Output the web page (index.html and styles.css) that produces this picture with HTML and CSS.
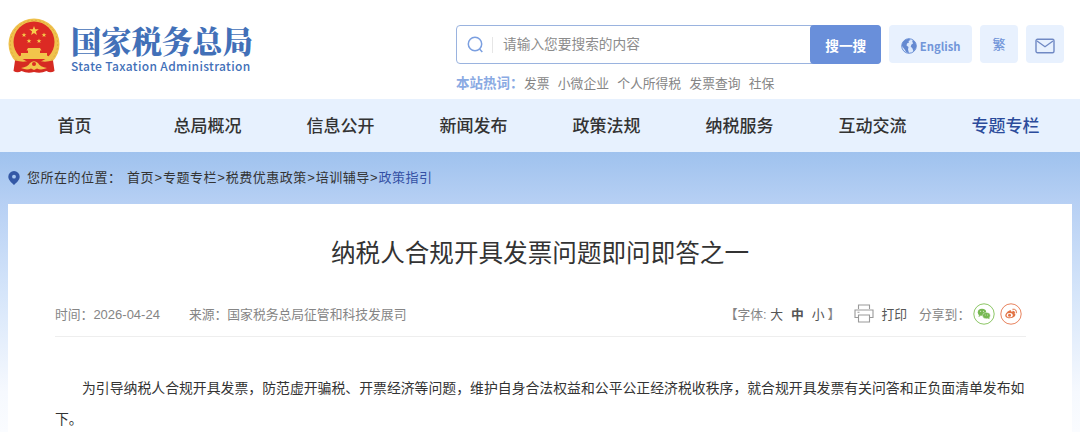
FILE: index.html
```
<!DOCTYPE html>
<html lang="zh-CN">
<head>
  <meta charset="UTF-8">
  <meta name="viewport" content="width=device-width, initial-scale=1.0">
  <title>纳税人合规开具发票问题即问即答之一</title>
  <link rel="stylesheet" href="styles.css">
</head>
<body>

<header class="header">
  <a class="logo">
    <svg class="emblem" viewBox="0 0 52 56">
      <circle cx="26" cy="26" r="25.500" fill="#efc14c"/>
      <circle cx="26" cy="26" r="23.700" fill="none" stroke="#dba33c" stroke-width=".8" stroke-dasharray="2 2"/>
      <circle cx="26" cy="24" r="20.500" fill="#dc2a24"/>
      <path d="M26 8l1.200 3.300h3.600l-2.900 2.200 1 3.500-2.900-2.100-2.900 2.100 1-3.500-2.900-2.200h3.600z" fill="#f6ce4c"/>
      <path id="star" d="M16 14.500l.6 1.700h1.800l-1.400 1.100.5 1.800-1.500-1.100-1.500 1.100.5-1.800-1.400-1.100h1.800z" fill="#f6ce4c"/>
      <use href="#star" x="20"/>
      <use href="#star" x="5" y="6"/>
      <use href="#star" x="15" y="6"/>
      <path d="M20 30h12l1.500 2.500H32V35h7v2.500l3 1.500v2H10v-2l3-1.500V35h7v-2.500h-1.500z" fill="#f2c44b"/>
      <path d="M7 42.500q10 2.500 15-.5l4-1 4 1q5 3 15 .5l1.500 10.500q-4 2.500-8 0-6 3-12.500 1-6.500 2-12.500-1-4 2.500-8 0z" fill="#d62a22"/>
      <path d="M13 50q7-1 9-5 4-3.500 8 0 2 4 9 5-6 2.500-10 .5l-3 1.500-3-1.500q-4 2-10-.5z" fill="#f2c44b"/>
      <circle cx="26" cy="46" r="2" fill="#dc2a24"/>
    </svg>
    <span class="logo-text">
      <strong>国家税务总局</strong>
      <em>State Taxation Administration</em>
    </span>
  </a>

  <div class="header-right">
    <div class="tools">
      <div class="search">
        <svg class="search-icon" viewBox="0 0 18 18"><circle cx="8" cy="8" r="6.700"/><path d="M12.500 13l2.800 3"/></svg>
        <span class="placeholder">请输入您要搜索的内容</span>
        <button class="search-btn">搜一搜</button>
      </div>
      <a class="tool english">
        <svg viewBox="0 0 16 16">
          <circle cx="8" cy="8" r="7.300" fill="#dce9fc" stroke="#6c91d6" stroke-width="1"/>
          <path d="M1 6Q3 1 8 .8L9.500 2 7.500 3 8 4.500 6 5.500 5.500 7.500l2 1.500L7 11.500 8 15Q5 15 4 12L1 8z" fill="#6489d1"/>
          <path d="M11 2.500l2 .5q3 3 2 7l-2.500 3.500-1-3-1.800-2 .8-2 1.500-1z" fill="#6489d1"/>
        </svg>
        English
      </a>
      <a class="tool trad">繁</a>
      <a class="tool mail">
        <svg viewBox="0 0 20 16"><rect x="1" y="1.200" width="18" height="13.500" rx="1.500"/><path d="M2 3l8 5.700L18 3"/></svg>
      </a>
    </div>
    <div class="hot">
      <b>本站热词：</b><a>发票</a><a>小微企业</a><a>个人所得税</a><a>发票查询</a><a>社保</a>
    </div>
  </div>
</header>

<nav class="nav">
  <a>首页</a>
  <a>总局概况</a>
  <a>信息公开</a>
  <a>新闻发布</a>
  <a>政策法规</a>
  <a>纳税服务</a>
  <a>互动交流</a>
  <a class="active">专题专栏</a>
</nav>

<main class="main">
  <div class="crumbs">
    <svg viewBox="0 0 12 14"><path d="M6 0a5.700 5.700 0 0 1 5.700 5.700C11.700 9 8 12 6 14 4 12 .3 9 .3 5.700A5.700 5.700 0 0 1 6 0z" fill="#3458a6"/><circle cx="6" cy="5.700" r="1.900" fill="#a9c8f1"/></svg>
    <span class="where">您所在的位置：</span>
    <a>首页</a><i>&gt;</i><a>专题专栏</a><i>&gt;</i><a>税费优惠政策</a><i>&gt;</i><a>培训辅导</a><i>&gt;</i><a class="current">政策指引</a>
  </div>

  <article class="article">
    <h1>纳税人合规开具发票问题即问即答之一</h1>
    <div class="meta">
      <span class="time">时间：<span class="date">2026-04-24</span></span>
      <span class="source">来源：国家税务总局征管和科技发展司</span>
      <span class="sizes">【字体: <a>大</a><a class="on">中</a><a>小</a>】</span>
      <a class="print">
        <svg viewBox="0 0 20 19"><path d="M4.500 5V1h11v4M4.500 13.500H1V6h18v7.500h-3.500M4.500 11h11v7h-11zM3.500 8.300h2"/></svg>
        打印
      </a>
      <span class="share">分享到：</span>
      <svg class="social" viewBox="0 0 22 22">
        <circle cx="11" cy="11" r="10.200" fill="none" stroke="#8cc665"/>
        <ellipse cx="9" cy="9.300" rx="4.200" ry="3.500" fill="#76b852"/>
        <path d="M6 12l-.5 2 2.500-1.200z" fill="#76b852"/>
        <ellipse cx="13.400" cy="12.600" rx="3.900" ry="3.200" fill="#76b852" stroke="#fff" stroke-width=".4"/>
        <path d="M14.500 15l2 1.300-.4-2z" fill="#76b852"/>
        <g fill="#fff"><circle cx="7.600" cy="8.300" r=".5"/><circle cx="10.400" cy="8.300" r=".5"/><circle cx="12.200" cy="12" r=".45"/><circle cx="14.600" cy="12" r=".45"/></g>
      </svg>
      <svg class="social" viewBox="0 0 22 22">
        <circle cx="11" cy="11" r="10.200" fill="none" stroke="#e8835e"/>
        <path d="M9.500 7.500c1.200-.6 2 0 1.600 1.300 2-.8 3.300-.2 2.900 1.200 1.600.5 1.800 2 .8 3.300-2 2.400-7.500 2.700-9.100.5-1.400-2 1.400-5.300 3.800-6.300z" fill="#e27345"/>
        <ellipse cx="9.700" cy="12.200" rx="3" ry="2.100" fill="#fff"/>
        <circle cx="9.500" cy="12.300" r="1.500" fill="#e27345"/>
        <path d="M12.800 6.200q4-.6 3.600 3.600M13 8.200q1.800-.2 1.600 1.500" fill="none" stroke="#e27345" stroke-width="1" stroke-linecap="round"/>
      </svg>
    </div>
    <p>为引导纳税人合规开具发票，防范虚开骗税、开票经济等问题，维护自身合法权益和公平公正经济税收秩序，就合规开具发票有关问答和正负面清单发布如下。</p>
  </article>
</main>

</body>
</html>
```

FILE: styles.css
```
* {
  box-sizing: border-box;
}

body {
  margin: 0;
  height: 432px;
  overflow: hidden;
  font-family: "Liberation Sans", "Noto Sans CJK SC", sans-serif;
  color: #333;
  background: #fff;
}

svg {
  display: block;
  flex: none;
}

/* header */
.header {
  display: flex;
  justify-content: space-between;
  height: 99px;
  padding: 0 16px 0 8px;
}

.logo {
  display: flex;
  align-items: flex-start;
  padding-top: 18px;
}

.emblem {
  width: 52px;
  height: 56px;
}

.logo-text {
  margin-left: 11px;
  color: #4270b8;
}

.logo-text strong {
  display: block;
  margin-top: 4px;
  font: 900 30.300px/36px "Noto Serif CJK SC", "Noto Sans CJK SC", serif;
}

.logo-text em {
  display: block;
  font: 500 12px/16px "Noto Sans CJK SC", sans-serif;
  letter-spacing: 0.350px;
  white-space: nowrap;
}

.header-right {
  width: 608px;
  padding-top: 25px;
}

.tools {
  display: flex;
}

.search {
  display: flex;
  align-items: center;
  width: 426px;
  height: 39px;
  border: 1px solid #9ab3df;
  border-radius: 4px;
}

.search-icon {
  width: 18px;
  height: 18px;
  margin-left: 10px;
  fill: none;
  stroke: #7b9fe0;
  stroke-width: 1.500;
}

.placeholder {
  flex: 1;
  margin-left: 7px;
  padding-left: 10px;
  border-left: 1px solid #e6e6e6;
  font-size: 13.700px;
  line-height: 16px;
  color: #8c8c8c;
}

.search-btn {
  width: 71px;
  height: 39px;
  margin-right: -1px;
  padding: 0;
  border: none;
  border-radius: 4px;
  background: #698fda;
  color: #fff;
  font: bold 13.700px "Noto Sans CJK SC", sans-serif;
}

.tool {
  display: flex;
  align-items: center;
  justify-content: center;
  width: 38px;
  height: 38px;
  margin-left: 8px;
  border-radius: 4px;
  background: #e8f1fe;
  color: #7296d9;
  font: bold 13px "Noto Sans CJK SC", sans-serif;
}

.english {
  width: 83px;
  padding-top: 3px;
  font-size: 11.300px;
}

.english svg {
  width: 16px;
  height: 16px;
  margin-right: 3px;
}

.trad {
  padding-bottom: 2px;
  font-weight: 500;
}

.mail svg {
  width: 20px;
  height: 16px;
  margin-top: 3px;
  fill: none;
  stroke: #7089c4;
  stroke-width: 1.400;
}

.hot {
  display: flex;
  margin-top: 10px;
  font-size: 12.800px;
  line-height: 19px;
  color: #858585;
}

.hot b {
  width: 68px;
  font-size: 13.500px;
  color: #8aaae3;
  white-space: nowrap;
}

.hot a {
  margin-right: 8.200px;
}

/* nav */
.nav {
  display: grid;
  grid-template-columns: repeat(8, 1fr);
  height: 53px;
  padding: 0 8px;
  background: #e7f1fe;
  text-align: center;
  font-size: 17px;
  font-weight: 500;
  line-height: 55px;
}

.nav .active {
  color: #2b4b9b;
}

/* content */
.main {
  height: 280px;
  padding: 0 8px;
  background: linear-gradient(#9fc2ee, #b7d0f4 52px, #d5e5fa 140px, #f6f9fe 240px, #fafcff);
}

.crumbs {
  display: flex;
  align-items: center;
  height: 52px;
  padding-bottom: 1px;
  font-size: 13px;
  line-height: 19px;
  letter-spacing: 0.500px;
}

.crumbs svg {
  width: 12px;
  height: 14px;
}

.where {
  width: 100px;
  margin-left: 7px;
}

.crumbs i {
  padding: 0 0.400px;
  font-style: normal;
}

.crumbs .current {
  color: #3450a4;
}

.article {
  height: 228px;
  padding: 0 46px 0 47px;
  background: #fff;
}

.article h1 {
  margin: 0 1px 0 0;
  padding-top: 30px;
  text-align: center;
  font-size: 24.600px;
  font-weight: 400;
  line-height: 40px;
}

.meta {
  display: flex;
  align-items: center;
  height: 46px;
  margin-top: 17px;
  padding-right: 4px;
  border-bottom: 1px solid #eee;
  font-size: 12.800px;
  color: #858585;
}

.date {
  font-size: 13px;
}

.source {
  margin-left: 29px;
}

.sizes {
  margin-left: auto;
}

.sizes a {
  margin-right: 8px;
  color: #555;
}

.sizes a:last-child {
  margin-right: 3px;
}

.sizes .on {
  font-weight: bold;
}

.print {
  display: flex;
  align-items: center;
  margin: 0 12px 0 14px;
  color: #555;
}

.print svg {
  width: 20px;
  height: 19px;
  margin-right: 7px;
  fill: none;
  stroke: #999;
  stroke-width: 1.100;
}

.share {
  width: 54px;
}

.social {
  width: 22px;
  height: 22px;
}

.social + .social {
  margin-left: 5px;
}

.article p {
  margin: 36px 0 0;
  text-indent: 27px;
  font-size: 13.860px;
  line-height: 31px;
}
```
